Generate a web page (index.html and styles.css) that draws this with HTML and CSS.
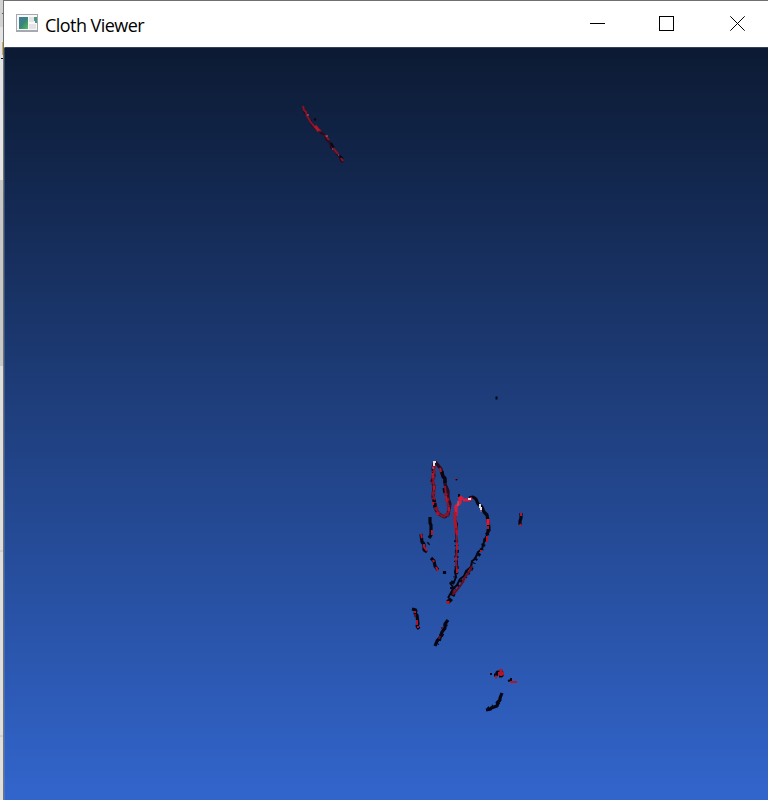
FILE: index.html
```
<!DOCTYPE html>
<html lang="en">
<head>
<meta charset="utf-8">
<title>Cloth Viewer</title>
<link rel="stylesheet" href="styles.css">
</head>
<body>
<div class="desktop">
  <div class="backdrop"></div>
  <main class="window">
    <header class="titlebar">
      <svg class="app-icon" width="23" height="18" viewBox="0 0 23 18" shape-rendering="crispEdges">
        <defs><linearGradient id="screen" x2="1" y2="1"><stop stop-color="#4678a8"/><stop offset=".5" stop-color="#388578"/><stop offset="1" stop-color="#58bd60"/></linearGradient></defs>
        <path fill="#a5a8b0" d="M0 0h22v18H0z"/><path fill="#f8f8f8" d="M1 1h20v15H1z"/>
        <path fill="url(#screen)" d="M3 3h9v12H3z"/><path fill="#e2e4e5" d="M13 3h5v5h-5zM13 10h7v5h-7z"/>
        <path fill="#4b9684" d="M18 3h3v6h-2V7h-1z"/>
      </svg>
      <h1 class="title">Cloth Viewer</h1>
      <div class="controls">
        <svg width="15" height="15" viewBox="0 0 15 15" shape-rendering="crispEdges"><path d="M0 7.5h15"/></svg>
        <svg width="15" height="15" viewBox="0 0 15 15" shape-rendering="crispEdges"><path d="M.5 .5h14v14H.5z"/></svg>
        <svg width="15" height="15" viewBox="0 0 15 15"><path d="M.3 .3l14.4 14.400M14.7 .3L.3 14.7"/></svg>
      </div>
    </header>
    <section class="viewport">
      <svg class="scene" width="764" height="753" viewBox="4 47 764 753">
        <g class="dark">
          <path class="soft" d="M303 107l2 3-1 2 3 3 1 4 3 2 1 4 4 4 3 1 2 3 4 2 1 4 4 4 1 5 3 1 3 5 3 3 1 4 2 1"/>
          <path d="M314 119l2 1M331 143l3 5M340 156l3 3"/>
          <path class="soft wide" d="M434 463l-1 6 1 7-2 5 2 5-1 11 2 7 1 6 3 4 5 3 4-2 1-5 1-6-2-6 0-7-3-7 0-5-3-5-1-5-4-5-2-2"/>
          <path class="wide" d="M442 471l1 6 2 1 0 5M444 488l1 5M434 499l1 9"/>
          <path d="M456 479l1 1M459 494v3"/>
          <path class="wide" d="M430 517l0 6 1 2 0 6 0 4-2 3M429 543l-1 1"/>
          <path class="wide" d="M421 534l1 8 2 2 0 6 3 2M431 558l3 3 1 5 3 4M444.500 571v3"/>
          <path d="M456 508l-1 12 2 4-1 11 1 10-1 11 1 9-2 6 1 6-2 5-4 1 3 4-1 8"/>
          <path class="rough" d="M456 540l1 10-1 11 1 9-2 8-3 6 0 10"/>
          <path class="wide" d="M469 498l4-1 3 2 2 5 4 3 2 5 3 3 1 6 1 7-2 7"/>
          <path d="M487 535l-3 7-2 7-4 3-3 7-3 2-1 6-5 4-2 5-4 3-3 6-4 4-5 9"/>
          <path class="rough" d="M489 529l-3 9-5 13-6 9-4 9-8 11-6 8-8 14"/>
          <path class="blob" d="M448 599l3 3"/>
          <path class="wide" d="M412 609l4 1-1 4 2 1 1 9-1 2 2 3"/>
          <path class="wide" d="M448 620l-3 4 0 4-3 4-2 6-3 3-2 5"/>
          <path class="rough" d="M446 624l-3 8-4 8-2 4"/>
          <path class="wide" d="M521 513l0 5-1 3 0 4"/>
          <path d="M496.500 396.500v3M490 674h2M508 681l3-1M511 678v3"/>
          <path class="wide" d="M494 675h3v-3h5v4h-3"/>
          <path class="wide" d="M486 710l5-1 0-1 6-2 1-4 2-2 0-2 2-5"/>
          <path class="rough" d="M488 709l6-3 5-4"/>
        </g>
        <g class="red">
          <path class="tone" d="M303 106l1 4 2 2 1 4 3 5 3 4 4 4 4 2M325 135l4 5M333 148l5 6M341 158l2 3"/>
          <path class="wide" d="M315 126l4 5"/>
          <path class="tone" d="M434 465l0 8-1 4 1 10-1 8 2 5M436 509l3 5 5 3 5-5-1-8-2-8-1-10"/>
          <path class="tone rough" d="M434 466l0 8-2 6 2 7-1 10 2 8 3 8 6 4 5-4-1-10-2-9"/>
          <path d="M433 473v5M434 486v4M433 502v3M437 512l1 3M446 496l1 6M449 507v4M440 468l1 4"/>
          <path class="wide hot" d="M456 516l0-10 4-3 0-6 3 2"/>
          <path class="hot wide" d="M463 500l6 0 3-2"/>
          <path class="wide" d="M455 512l0 9 1 7 0 5"/>
          <path class="tone" d="M456 528l1 17-1 17 1 8"/>
          <path class="deep" d="M454 590l-1 5"/>
          <path d="M457 530v5M457 543v7M456 557v3M457 569v4"/>
          <path class="wide hot" d="M488 519v6"/>
          <path d="M488 526v3M487 536v6M481 550v2M471 568l-2 3M465 579l-2 3M458 588l-3 4"/>
          <path class="deep" d="M472 566l-2 5-5 6-4 8-7 9"/>
          <path class="wide" d="M448 601v3"/>
          <path d="M421 534l1 4M424 544l0 3 3 4M433 560l1 2M436 567l2 4M432 530l0 5M456 478v1M415 611v2M417 620v5M418 626v2M521 513v3M520 524l1 2"/>
          <path class="deep" d="M442 627v2M440 636l-1 3M415 614v3"/>
          <path class="wide" d="M498 673.500l6 0M501 669v7M495 677h2"/>
          <path d="M510 682h7"/>
        </g>
        <g class="highlight">
          <path d="M433 462h3M434 462v4M468 499h3M480 504v4M481 507v3"/>
          <path class="faint" d="M307 115h2M326 136h2M332 149h1M338 155h1M433 467v2M458 501v5M481 510v2"/>
        </g>
      </svg>
    </section>
  </main>
</div>
</body>
</html>
```
FILE: styles.css
```
* { box-sizing: border-box; }
body { margin: 0; overflow: hidden; }
.desktop { display: grid; grid-template-columns: 3px 1fr; width: 768px; height: 800px; }
.backdrop {
  background:
    linear-gradient(#d8aa51, #d8aa51) 2px 42px / 1px 13px no-repeat,
    linear-gradient(#111, #111) 1px 58px / 2px 1px no-repeat,
    linear-gradient(#555, #555) 2px 13px / 1px 1px no-repeat,
    linear-gradient(#d2d2d2 0 27px, #e4e4e4 27px 180px, #c8c8c8 180px 366px, #dedede 366px 550px, #cfcfcf 550px 552px, #dedede 552px 735px, #cfcfcf 735px 737px, #dedede 737px);
}
.window {
  display: flex;
  flex-direction: column;
  min-width: 0;
  border-left: 1px solid #707376;
}
.titlebar {
  display: flex;
  align-items: center;
  height: 47px;
  padding: 0 23px 0 12px;
  border-top: 1px solid #707070;
  background: #fff;
}
.app-icon { flex: none; margin-top: -2px; }
.title {
  margin: 1px 0 0 6px;
  font: 400 18px/24px "Open Sans", "Noto Sans", sans-serif;
  letter-spacing: -.54px;
  color: #000;
  white-space: nowrap;
}
.controls { display: flex; margin: -2px 0 0 auto; gap: 54px; }
.controls svg { display: block; fill: none; stroke: #000; stroke-width: 1; }
.controls svg:last-child { margin-left: 2px; }
.viewport {
  flex: 1;
  border-top: 1px solid #344258;
  border-left: 1px solid rgba(130, 155, 185, .3);
  background: linear-gradient(#0c1a33, #3265cc);
}
.scene { display: block; margin: -1px 0 0 -1px; }
.scene path { fill: none; stroke-width: 2; stroke-linejoin: bevel; }
.scene .wide { stroke-width: 3.2; }
.scene .rough { stroke-width: 4; stroke-dasharray: 2 3 1 4 3 3; }
.scene .blob { stroke-width: 5; }
.dark path { stroke: #080612; }
.dark .soft { stroke: #2b0b1b; }
.red path { stroke: #ad1729; }
.red .deep { stroke: #641023; }
.red .tone { stroke: #86142a; }
.red .hot { stroke: #dc1b38; }
.highlight path { stroke: #eadbea; }
.highlight .faint { stroke: #a47083; stroke-width: 1; }
```
